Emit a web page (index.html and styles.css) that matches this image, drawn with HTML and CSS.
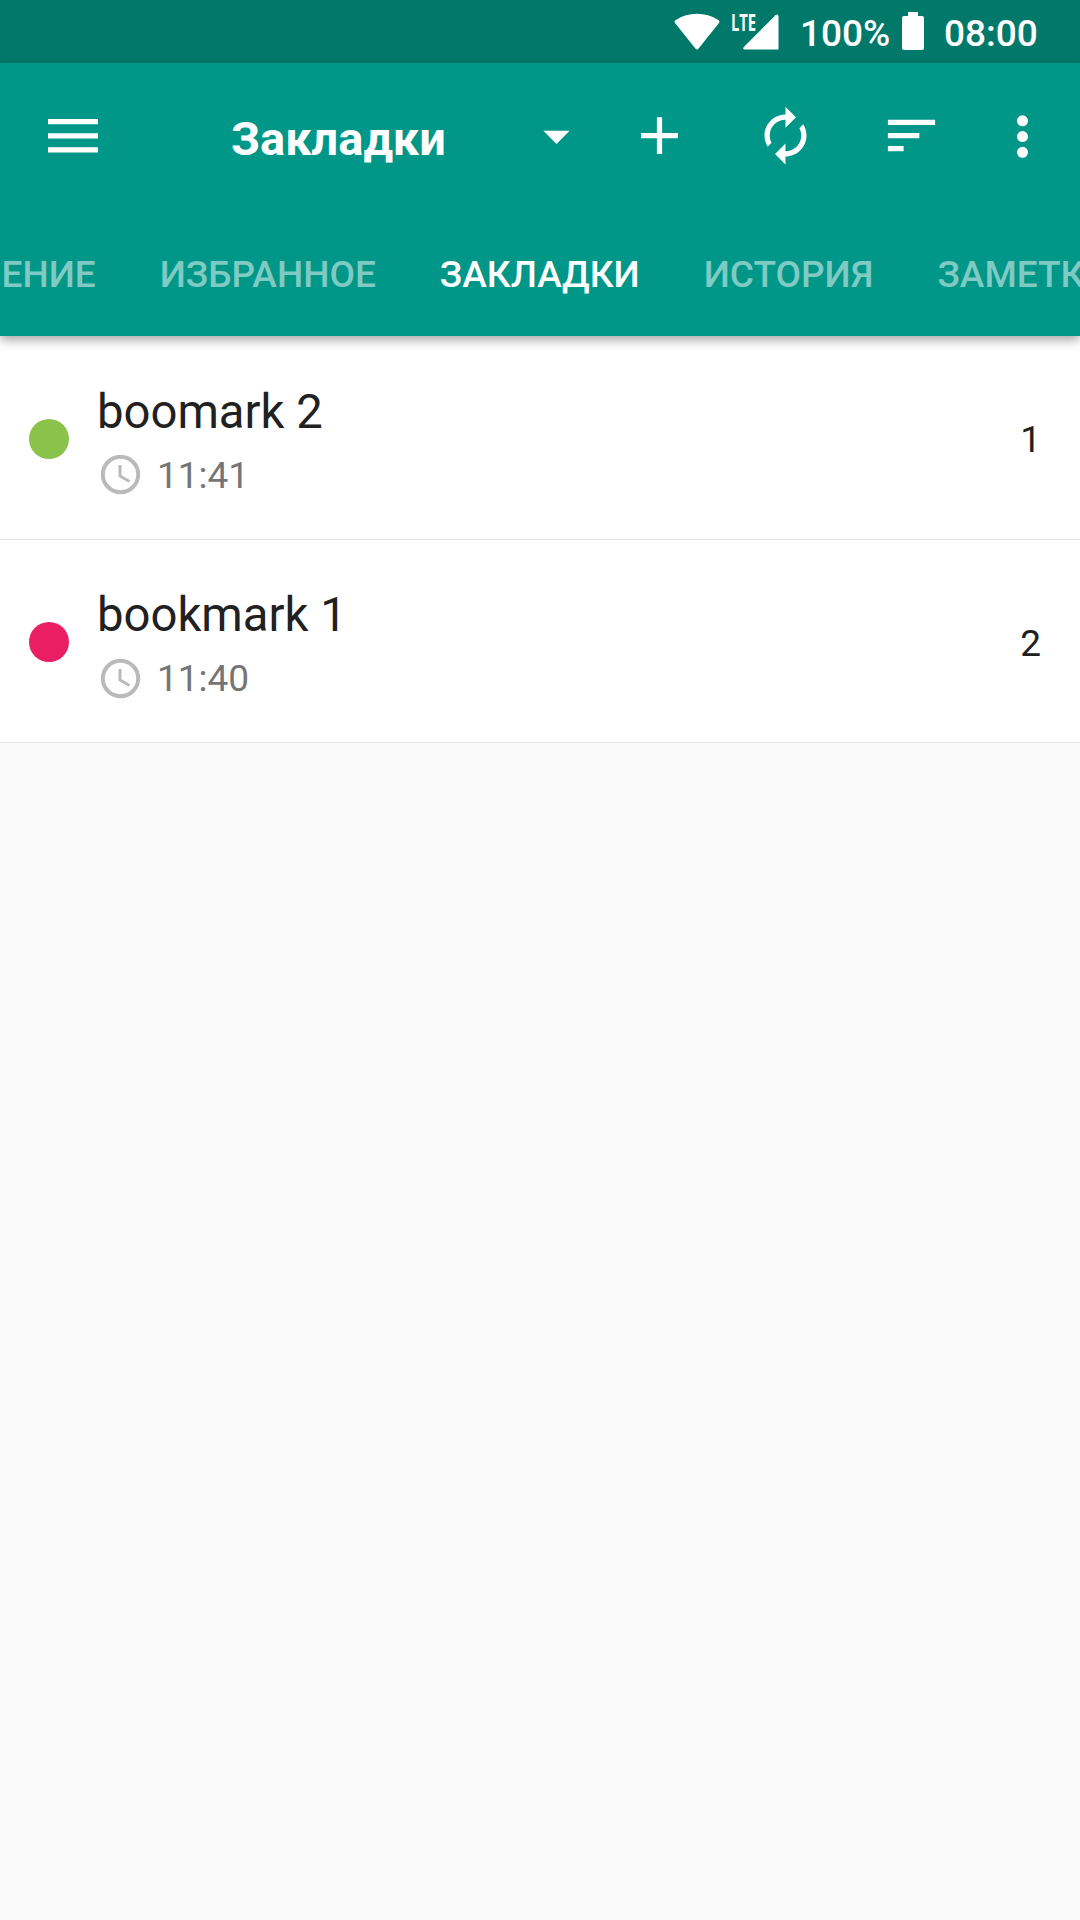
FILE: index.html
```html
<!DOCTYPE html>
<html lang="ru">
<head>
  <meta charset="UTF-8">
  <meta name="viewport" content="width=device-width, initial-scale=1.0">
  <title>Закладки</title>
  <link rel="stylesheet" href="styles.css">
</head>
<body>
  <!-- Status bar -->
  <div class="status-bar">
    <svg class="wifi" width="46" height="38" viewBox="0 0 46 38"><path d="M1.2 10.2Q-.3 8.4 1.8 7C14-1.3 32-1.3 44.200 7Q46.300 8.400 44.800 10.200L24.600 35.500Q23 37.500 21.400 35.500Z"/></svg>
    <div class="signal">
      <span class="lte">LTE</span>
      <svg width="36" height="36" viewBox="0 0 36 36"><path d="M1 35.500Q-.5 35 .8 33L32.500 1.200Q35.500-.8 35.500 3V35.500Z"/></svg>
    </div>
    <span class="percent">100%</span>
    <svg class="battery" width="22" height="38" viewBox="0 0 22 38"><path d="M6 0H16V4H20Q22 4 22 6V36Q22 38 20 38H2Q0 38 0 36V6Q0 4 2 4H6Z"/></svg>
    <span class="clock">08:00</span>
  </div>

  <header class="header">
    <!-- Toolbar -->
    <div class="toolbar">
      <svg class="menu" width="50" height="34" viewBox="0 0 50 34"><path d="M0 0H50V5.300H0ZM0 14.200H50V19.500H0ZM0 28.300H50V33.600H0Z"/></svg>
      <h1 class="title">Закладки</h1>
      <svg class="icon arrow" viewBox="0 0 24 24"><path d="M7 10.200l5 5 5-5z"/></svg>
      <svg class="icon add" viewBox="0 0 24 24"><path d="M19 13h-6v6h-2v-6H5v-2h6V5h2v6h6v2z"/></svg>
      <svg class="icon sync" viewBox="0 0 24 24"><path d="M12 6v3l4-4-4-4v3c-4.420 0-8 3.580-8 8 0 1.570.46 3.030 1.240 4.260L6.700 14.800c-.45-.83-.7-1.790-.7-2.800 0-3.310 2.690-6 6-6zm6.760 1.740L17.300 9.200c.44.84.7 1.790.7 2.800 0 3.310-2.690 6-6 6v-3l-4 4 4 4v-3c4.420 0 8-3.580 8-8 0-1.570-.46-3.030-1.240-4.260z"/></svg>
      <svg class="icon sort" viewBox="0 0 24 24"><path d="M3 18h6v-2H3v2zM3 6v2h18V6H3zm0 7h12v-2H3v2z"/></svg>
      <svg class="icon more" viewBox="0 0 24 24"><circle cx="12" cy="6.400" r="2.100"/><circle cx="12" cy="12.400" r="2.100"/><circle cx="12" cy="18.400" r="2.100"/></svg>
    </div>

    <!-- Tabs -->
    <nav class="tabs">
      <span class="tab">ЕНИЕ</span>
      <span class="tab">ИЗБРАННОЕ</span>
      <span class="tab active">ЗАКЛАДКИ</span>
      <span class="tab">ИСТОРИЯ</span>
      <span class="tab">ЗАМЕТК</span>
    </nav>
  </header>

  <!-- Bookmarks -->
  <ul class="list">
    <li class="item">
      <span class="dot green"></span>
      <div class="info">
        <div class="name">boomark 2</div>
        <div class="time">
          <svg class="time-icon" width="40" height="40" viewBox="0 0 40 40"><circle cx="19.500" cy="19.500" r="17.700"/><path d="M19 10V21L28.500 26.500"/></svg>
          <span>11:41</span>
        </div>
      </div>
      <span class="count">1</span>
    </li>
    <li class="item">
      <span class="dot pink"></span>
      <div class="info">
        <div class="name">bookmark 1</div>
        <div class="time">
          <svg class="time-icon" width="40" height="40" viewBox="0 0 40 40"><circle cx="19.500" cy="19.500" r="17.700"/><path d="M19 10V21L28.500 26.500"/></svg>
          <span>11:40</span>
        </div>
      </div>
      <span class="count">2</span>
    </li>
  </ul>
</body>
</html>
```
FILE: styles.css
```css
* {
  box-sizing: border-box;
}

body {
  margin: 0;
  min-height: 1920px;
  overflow: hidden;
  font-family: Roboto, sans-serif;
  font-size: 37px;
  color: #212121;
  background-color: #fafafa;
}

svg {
  display: block;
  flex-shrink: 0;
  fill: #fff;
}

/* Status bar */
.status-bar {
  display: flex;
  align-items: flex-start;
  height: 63px;
  padding-left: 674px;
  background-color: #00796b;
  color: #fff;
  font-weight: 500;
  line-height: 43px;
}

.wifi {
  margin-top: 13px;
}

.signal {
  display: flex;
  align-items: flex-start;
  width: 58px;
  margin: 14px 0 0 11px;
}

.lte {
  width: 12px;
  font-family: "Open Sans", sans-serif;
  font-size: 23px;
  font-weight: 700;
  line-height: 16px;
  transform: scaleX(0.64);
  transform-origin: left;
}

.percent {
  width: 113px;
  padding-left: 11px;
  margin-top: 12px;
}

.battery {
  margin-top: 12px;
}

.clock {
  margin: 12px 0 0 20px;
}

/* Header */
.header {
  position: relative;
  height: 273px;
  background-color: #009688;
  color: #fff;
  box-shadow: 0 4px 10px rgba(0, 0, 0, 0.35);
}

.toolbar {
  display: flex;
  align-items: center;
  height: 145px;
  padding-left: 48px;
}

.icon {
  width: 63px;
  height: 63px;
}

.title {
  width: 294px;
  margin: 5px 0 0 133px;
  font-size: 47px;
  font-weight: 700;
}

.add {
  margin-left: 40px;
}

.sync {
  margin-left: 63px;
}

.sort {
  margin-left: 63px;
}

.more {
  margin-left: 48px;
}

.tabs {
  display: flex;
  gap: 64px;
  height: 128px;
  padding: 5px 0 0 1.5px;
  overflow: hidden;
  font-weight: 500;
  line-height: 123px;
  white-space: nowrap;
}

.tab {
  color: rgba(255, 255, 255, 0.5);
}

.tab.active {
  color: #fff;
}

/* List */
.list {
  margin: 0;
  padding: 0;
  list-style: none;
}

.item {
  display: flex;
  align-items: center;
  height: 203px;
  padding: 2px 39px 0 28.5px;
  background-color: #fff;
  border-bottom: 1px solid #e5e5e5;
}

.item:first-child {
  height: 204px;
}

.dot {
  width: 40px;
  height: 40px;
  border-radius: 50%;
}

.green {
  background-color: #8bc34a;
}

.pink {
  background-color: #e91e63;
}

.info {
  flex: 1;
  margin-left: 28.5px;
  padding-top: 3px;
}

.name {
  font-size: 47.25px;
  line-height: 56px;
}

.time {
  display: flex;
  align-items: center;
  gap: 16px;
  margin: 14px 0 0 4px;
  line-height: 43px;
  color: #757575;
}

.count {
  padding-top: 2px;
}

.time-icon {
  fill: none;
  stroke: #bababa;
  stroke-width: 4;
}

.time-icon path {
  stroke-width: 3;
}
```
